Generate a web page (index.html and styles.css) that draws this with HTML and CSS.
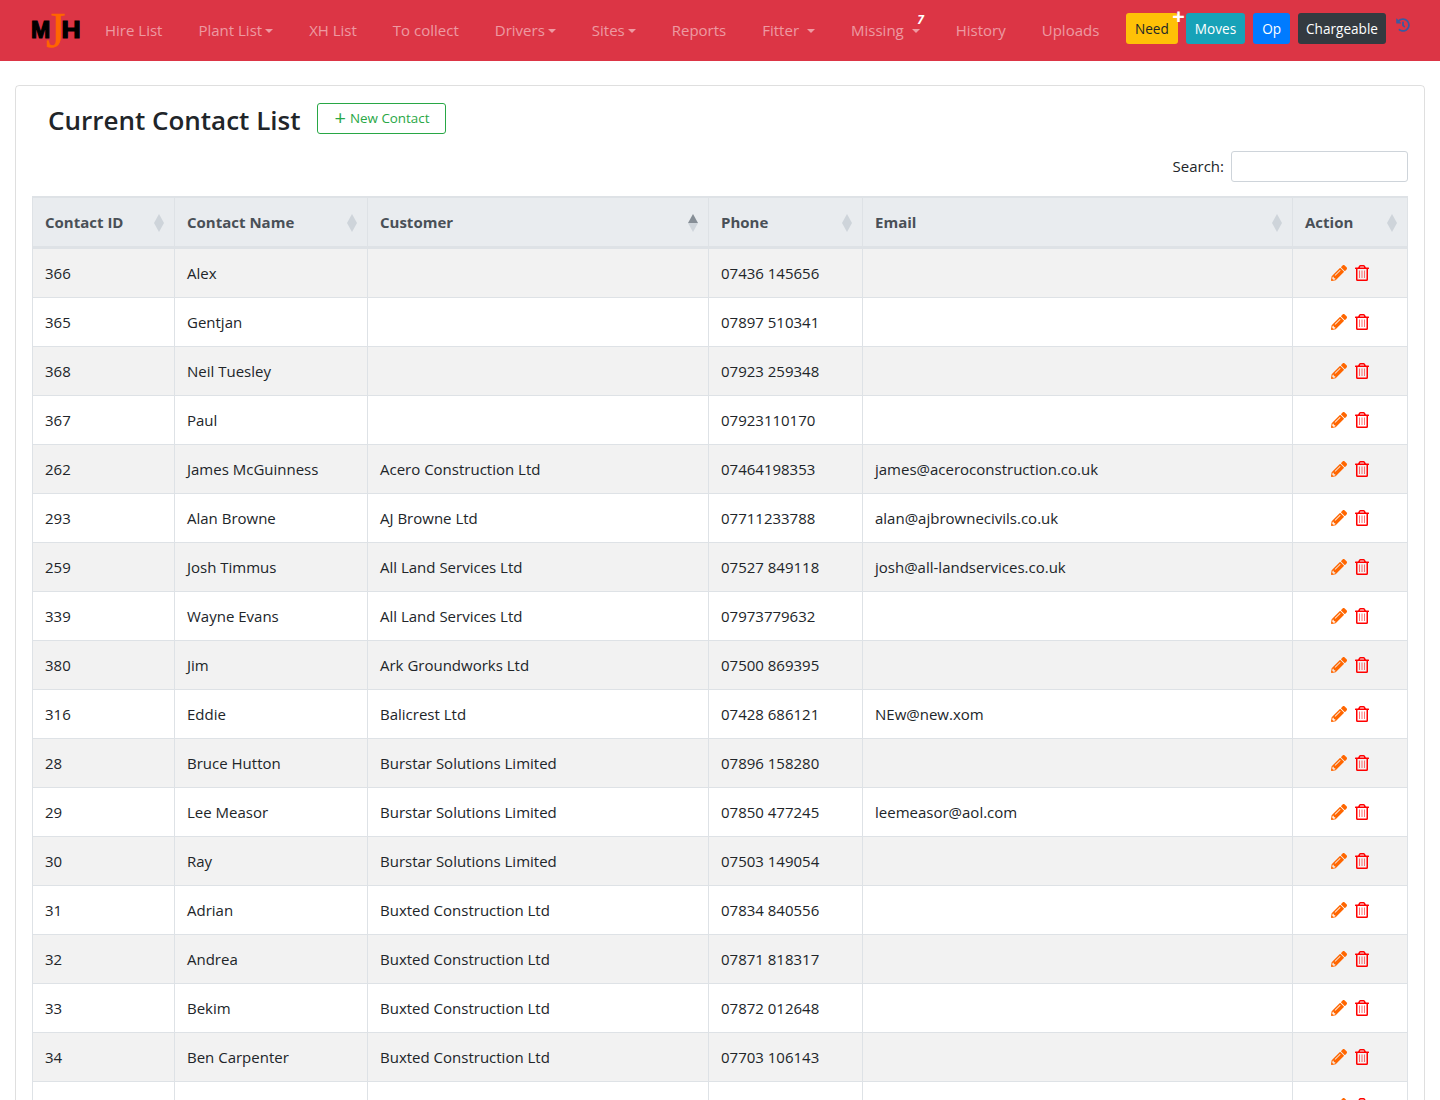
FILE: index.html
```html
<!DOCTYPE html>
<html lang="en">
<head>
    <meta charset="UTF-8">
    <meta name="viewport" content="width=device-width, initial-scale=1.0">
    <title>Current Contact List</title>
    <link rel="stylesheet" href="styles.css">
</head>
<body>
    <svg class="icon-defs" aria-hidden="true">
        <symbol id="i-pencil" viewBox="0 0 512 512"><path d="M497.9 142.1l-46.1 46.1c-4.7 4.7-12.3 4.7-17 0l-111-111c-4.7-4.7-4.7-12.3 0-17l46.1-46.1c18.7-18.7 49.1-18.7 67.9 0l60.1 60.1c18.8 18.7 18.8 49.1 0 67.9zM284.2 99.8L21.6 362.4.4 483.9c-2.9 16.4 11.4 30.6 27.8 27.8l121.5-21.3 262.6-262.6c4.7-4.7 4.7-12.3 0-17l-111-111c-4.8-4.7-12.4-4.7-17.1 0zM124.1 339.9c-5.5-5.5-5.5-14.3 0-19.8l154-154c5.5-5.5 14.3-5.5 19.8 0s5.5 14.3 0 19.8l-154 154c-5.5 5.5-14.3 5.5-19.8 0zM88 424h48v36.3l-64.5 11.3-31.1-31.1L51.7 376H88v48z"/></symbol>
        <symbol id="i-trash" viewBox="0 0 448 512"><path d="M432 80h-82.41l-34-56.7A48 48 0 0 0 274.41 0H173.59a48 48 0 0 0-41.16 23.3L98.41 80H16A16 16 0 0 0 0 96v16a16 16 0 0 0 16 16h16v336a48 48 0 0 0 48 48h288a48 48 0 0 0 48-48V128h16a16 16 0 0 0 16-16V96a16 16 0 0 0-16-16zM171.84 50.91A6 6 0 0 1 177 48h94a6 6 0 0 1 5.15 2.91L293.61 80H154.39zM368 464H80V128h288z"/><path opacity=".55" d="M128 176h32v240h-32zM208 176h32v240h-32zM288 176h32v240h-32z"/></symbol>
    </svg>

    <nav class="navbar">
        <a class="brand" href="#"><span>M</span><span class="brand-j">J</span><span class="brand-h">H</span></a>
        <ul class="nav-links">
            <li><a href="#">Hire List</a></li>
            <li><a href="#" class="dropdown">Plant List</a></li>
            <li><a href="#">XH List</a></li>
            <li><a href="#">To collect</a></li>
            <li><a href="#" class="dropdown">Drivers</a></li>
            <li><a href="#" class="dropdown">Sites</a></li>
            <li><a href="#">Reports</a></li>
            <li><a href="#" class="dropdown dropdown-wide">Fitter</a></li>
            <li><a href="#" class="dropdown dropdown-wide">Missing<span class="count">7</span></a></li>
            <li><a href="#">History</a></li>
            <li><a href="#">Uploads</a></li>
        </ul>
        <div class="nav-buttons">
            <button class="btn btn-need">Need<span class="plus">+</span></button>
            <button class="btn btn-moves">Moves</button>
            <button class="btn btn-op">Op</button>
            <button class="btn btn-charge">Chargeable</button>
            <a href="#" class="history-link">
                <svg width="14" height="14" viewBox="0 0 512 512"><path d="M504 255.531c.253 136.64-111.18 248.372-247.82 248.468-59.015.042-113.223-20.53-155.822-54.911-11.077-8.94-11.905-25.541-1.839-35.607l11.267-11.267c8.609-8.609 22.353-9.551 31.891-1.984C173.062 425.135 212.781 440 256 440c101.705 0 184-82.311 184-184 0-101.705-82.311-184-184-184-48.814 0-93.149 18.969-126.068 49.932l50.754 50.754c10.08 10.08 2.941 27.314-11.313 27.314H24c-8.837 0-16-7.163-16-16V38.627c0-14.254 17.234-21.393 27.314-11.314l49.372 49.372C129.209 34.136 189.552 8 256 8c136.81 0 247.747 110.78 248 247.531zm-180.912 78.784l9.823-12.63c8.138-10.463 6.253-25.542-4.21-33.679L288 256.349V152c0-13.255-10.745-24-24-24h-16c-13.255 0-24 10.745-24 24v135.651l65.409 50.874c10.463 8.137 25.541 6.253 33.679-4.21z"/></svg>
            </a>
        </div>
    </nav>

    <main class="page">
        <div class="card">
            <div class="card-title">
                <h1>Current Contact List</h1>
                <a href="#" class="btn-new"><span class="btn-new-plus">+</span>New Contact</a>
            </div>
            <div class="search-row">
                <label for="search">Search:</label>
                <input type="text" id="search">
            </div>
            <table class="contacts">
                <colgroup>
                    <col class="col-id"><col class="col-name"><col class="col-customer"><col class="col-phone"><col class="col-email"><col class="col-action">
                </colgroup>
                <thead>
                    <tr>
                        <th>Contact ID<span class="sort"></span></th>
                        <th>Contact Name<span class="sort"></span></th>
                        <th>Customer<span class="sort sort-asc"></span></th>
                        <th>Phone<span class="sort"></span></th>
                        <th>Email<span class="sort"></span></th>
                        <th>Action<span class="sort"></span></th>
                    </tr>
                </thead>
                <tbody id="rows"></tbody>
            </table>
        </div>
    </main>

    <script>
        const contacts = [
            ['366', 'Alex', '', '07436 145656', ''],
            ['365', 'Gentjan', '', '07897 510341', ''],
            ['368', 'Neil Tuesley', '', '07923 259348', ''],
            ['367', 'Paul', '', '07923110170', ''],
            ['262', 'James McGuinness', 'Acero Construction Ltd', '07464198353', 'james@aceroconstruction.co.uk'],
            ['293', 'Alan Browne', 'AJ Browne Ltd', '07711233788', 'alan@ajbrownecivils.co.uk'],
            ['259', 'Josh Timmus', 'All Land Services Ltd', '07527 849118', 'josh@all-landservices.co.uk'],
            ['339', 'Wayne Evans', 'All Land Services Ltd', '07973779632', ''],
            ['380', 'Jim', 'Ark Groundworks Ltd', '07500 869395', ''],
            ['316', 'Eddie', 'Balicrest Ltd', '07428 686121', 'NEw@new.xom'],
            ['28', 'Bruce Hutton', 'Burstar Solutions Limited', '07896 158280', ''],
            ['29', 'Lee Measor', 'Burstar Solutions Limited', '07850 477245', 'leemeasor@aol.com'],
            ['30', 'Ray', 'Burstar Solutions Limited', '07503 149054', ''],
            ['31', 'Adrian', 'Buxted Construction Ltd', '07834 840556', ''],
            ['32', 'Andrea', 'Buxted Construction Ltd', '07871 818317', ''],
            ['33', 'Bekim', 'Buxted Construction Ltd', '07872 012648', ''],
            ['34', 'Ben Carpenter', 'Buxted Construction Ltd', '07703 106143', ''],
            ['', '', '', '', '']
        ];

        const actions = `<td class="actions">
            <svg class="icon-edit"><use href="#i-pencil"></use></svg>
            <svg class="icon-delete"><use href="#i-trash"></use></svg>
        </td>`;

        document.getElementById('rows').innerHTML = contacts.map(function (c) {
            return '<tr>' + c.map(function (v) { return `<td>${v}</td>`; }).join('') + actions + '</tr>';
        }).join('');
    </script>
</body>
</html>
```

FILE: styles.css
```css
html, body {
    height: 1100px;
    overflow: hidden;
}
body {
    margin: 0;
    font-family: "Open Sans", "Noto Sans", sans-serif;
    font-size: 15px;
    color: #212529;
    background: #fff;
}
.icon-defs {
    display: none;
}

/* navbar */
.navbar {
    display: flex;
    align-items: center;
    height: 61px;
    padding: 0 30px 0 31px;
    background: #dc3545;
    box-sizing: border-box;
}
.brand {
    display: flex;
    align-items: center;
    justify-content: space-between;
    position: relative;
    width: 50px;
    margin-right: 6px;
    font-family: "Liberation Sans", sans-serif;
    font-size: 23px;
    font-weight: bold;
    line-height: 33px;
    color: #000;
    text-decoration: none;
    -webkit-text-stroke: 1.2px #000;
}
.brand .brand-h {
    transform: scaleX(1.15);
    transform-origin: right;
}
.brand .brand-j {
    position: absolute;
    left: 15px;
    top: -14px;
    font-family: "Liberation Serif", serif;
    font-size: 50px;
    font-weight: normal;
    line-height: 60px;
    color: #ff6600;
    -webkit-text-stroke: .5px #ff6600;
}
.nav-links {
    display: flex;
    list-style: none;
    margin: 0;
    padding: 0;
}
.nav-links a {
    display: block;
    position: relative;
    padding: 0 18px;
    line-height: 61px;
    color: rgba(255, 255, 255, .5);
    text-decoration: none;
}
.dropdown::after {
    content: "";
    display: inline-block;
    margin-left: 3px;
    vertical-align: 3px;
    border-top: 4px solid;
    border-left: 4px solid transparent;
    border-right: 4px solid transparent;
}
.dropdown-wide::after {
    margin-left: 8px;
}
.count {
    position: absolute;
    top: -11px;
    right: 14px;
    font-size: 12px;
    font-weight: bold;
    font-style: italic;
    color: #fff;
}
.nav-buttons {
    display: flex;
    align-items: center;
    gap: 8px;
    margin: 0 0 4px auto;
}
.btn {
    position: relative;
    height: 31px;
    padding: 0 9px;
    border: none;
    border-radius: 3px;
    font-family: inherit;
    font-size: 13.6px;
    cursor: pointer;
}
.btn-need { background: #ffc107; color: #212529; }
.btn-moves { background: #17a2b8; color: #fff; }
.btn-op { background: #007bff; color: #fff; }
.btn-charge { background: #343a40; color: #fff; padding: 0 8px; }
.plus {
    position: absolute;
    top: -10px;
    right: -7px;
    font-size: 22px;
    font-weight: bold;
    line-height: 24px;
    color: #fff;
}
.history-link {
    display: block;
    height: 14px;
    margin: -11px 0 0 2px;
    fill: #3b5aa0;
}

/* card and heading */
.page {
    padding: 24px 15px 0;
}
.card {
    padding: 16px;
    border: 1px solid rgba(0, 0, 0, .125);
    border-radius: 4px;
}
.card-title {
    display: flex;
    align-items: center;
    gap: 17px;
    height: 34px;
    padding-left: 16px;
    margin-top: 1px;
}
.card-title h1 {
    margin: 0;
    font-size: 26px;
    font-weight: 600;
    line-height: 34px;
}
.btn-new {
    margin-top: -4px;
    height: 29px;
    padding: 0 16px;
    border: 1px solid #28a745;
    border-radius: 3px;
    font-size: 13.4px;
    line-height: 29px;
    color: #28a745;
    text-decoration: none;
}
.btn-new-plus {
    margin-right: 4px;
    font-size: 20px;
    line-height: 20px;
    vertical-align: -2px;
}
.search-row {
    display: flex;
    align-items: center;
    justify-content: flex-end;
    gap: 7px;
    margin: 14px 0;
}
.search-row label {
    margin-top: -1px;
}
.search-row input {
    width: 177px;
    height: 31px;
    padding: 0 8px;
    border: 1px solid #ced4da;
    border-radius: 3px;
    box-sizing: border-box;
}

/* table */
.contacts {
    width: 1375px;
    table-layout: fixed;
    border-collapse: collapse;
}
.col-id { width: 142px; }
.col-name { width: 193px; }
.col-customer { width: 341px; }
.col-phone { width: 154px; }
.col-email { width: 430px; }
.col-action { width: 115px; }
.contacts th, .contacts td {
    padding: 0 12px;
    border: 1px solid #dee2e6;
    text-align: left;
    white-space: nowrap;
}
.contacts th {
    position: relative;
    height: 48px;
    background: #e9ecef;
    border-top-width: 2px;
    border-bottom-width: 3px;
    color: #495057;
    font-weight: 700;
}
.contacts td {
    height: 48px;
}
.contacts tbody tr:nth-child(odd) {
    background: #f2f2f2;
}
.sort {
    position: absolute;
    top: 16px;
    right: 10px;
}
.sort::before, .sort::after {
    content: "";
    display: block;
    border-left: 5px solid transparent;
    border-right: 5px solid transparent;
}
.sort::before {
    border-bottom: 9px solid #ced4da;
}
.sort::after {
    border-top: 9px solid #ced4da;
}
.sort-asc::before {
    border-bottom-color: #868e96;
}
.contacts .actions {
    text-align: center;
    font-size: 0;
}
.actions svg {
    width: 16px;
    height: 16px;
    vertical-align: middle;
}
.icon-edit {
    margin-right: 7px;
    fill: #ff6600;
}
.icon-delete {
    fill: #ff0000;
}
```
